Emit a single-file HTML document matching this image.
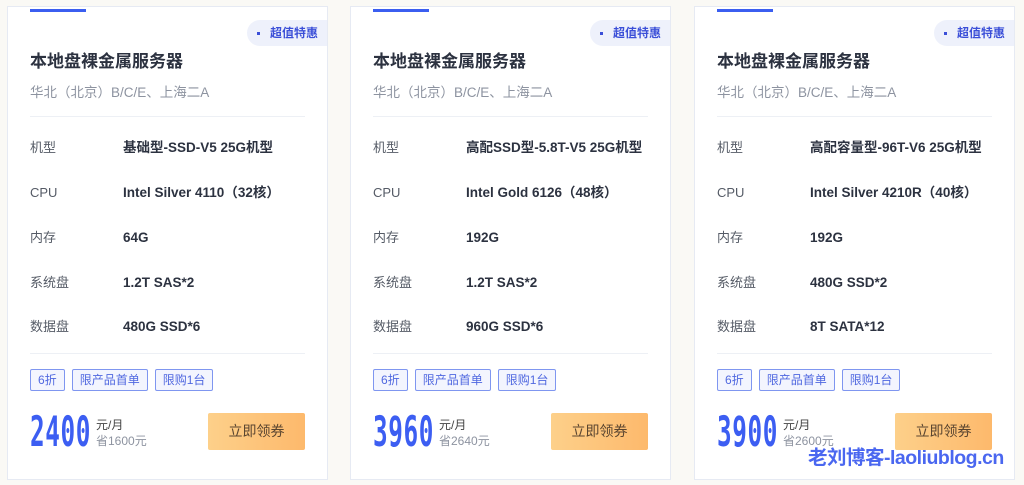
<!DOCTYPE html>
<html><head><meta charset="utf-8"><style>
*{margin:0;padding:0;box-sizing:border-box}
body{width:1024px;height:485px;background:#faf9f5;font-family:"Liberation Sans","Noto Sans CJK SC",sans-serif;position:relative;overflow:hidden}
.card{position:absolute;top:6px;width:321px;height:474px;background:#fff;border:1px solid #e6eaf3}
.bar{position:absolute;left:22px;top:2px;width:56px;height:3px;background:#3b5ef0}
.badge{position:absolute;right:0;top:13px;width:80px;height:26px;background:#eef1fb;border-radius:13px 0 0 13px;font-size:12px;color:#3b4fd8;font-weight:bold;line-height:26px;padding-left:10px}
.badge i{display:inline-block;width:3px;height:3px;background:#3b4fd8;margin-right:10px;vertical-align:middle}
.t{position:absolute;left:22px;top:40px;font-size:17px;font-weight:bold;color:#2c3240}
.s{position:absolute;left:22px;top:74px;font-size:13.5px;color:#8d93a0}
.hr{position:absolute;left:22px;width:275px;height:1px;background:#edf0f5}
.row{position:absolute;left:22px;font-size:13px;color:#555b66;line-height:18px;height:18px}
.row b{position:absolute;left:93px;top:0;white-space:nowrap;color:#2c3240;font-size:13.5px}
.tags{position:absolute;left:22px;top:362px;display:flex;gap:7px}
.tags span{border:1px solid #7f96f0;border-radius:2px;background:#f3f5fe;color:#5068e0;font-size:12px;height:22px;line-height:20px;padding:0 7px}
.price{position:absolute;left:22px;top:400px;font-family:"DejaVu Sans Mono","Liberation Mono",monospace;font-size:42px;color:#3c5ef2;font-weight:bold;transform:scaleX(.58);transform-origin:left;letter-spacing:1px}
.unit{position:absolute;left:88px;top:410px;font-size:12px;color:#444;line-height:16px}
.unit div+div{color:#8d93a0}
.btn{position:absolute;left:200px;top:406px;width:97px;height:37px;background:linear-gradient(90deg,#fdd08a,#fdb96c);border-radius:2px;font-size:14px;color:#5a4530;text-align:center;line-height:37px}
.wm{position:absolute;left:808px;top:441px;font-size:19.5px;font-weight:bold;color:#4a67f0;letter-spacing:-0.5px}
</style></head><body>
<div class="card" style="left:7px">
<div class="bar"></div><div class="badge"><i></i>超值特惠</div>
<div class="t">本地盘裸金属服务器</div><div class="s">华北（北京）B/C/E、上海二A</div>
<div class="hr" style="top:109px"></div>
<div class="row" style="top:132px">机型<b>基础型-SSD-V5 25G机型</b></div>
<div class="row" style="top:177px">CPU<b>Intel Silver 4110（32核）</b></div>
<div class="row" style="top:222px">内存<b>64G</b></div>
<div class="row" style="top:267px">系统盘<b>1.2T SAS*2</b></div>
<div class="row" style="top:311px">数据盘<b>480G SSD*6</b></div>
<div class="hr" style="top:346px"></div>
<div class="tags"><span>6折</span><span>限产品首单</span><span>限购1台</span></div>
<div class="price">2400</div><div class="unit"><div>元/月</div><div>省1600元</div></div>
<div class="btn">立即领券</div>
</div>
<div class="card" style="left:350px">
<div class="bar"></div><div class="badge"><i></i>超值特惠</div>
<div class="t">本地盘裸金属服务器</div><div class="s">华北（北京）B/C/E、上海二A</div>
<div class="hr" style="top:109px"></div>
<div class="row" style="top:132px">机型<b>高配SSD型-5.8T-V5 25G机型</b></div>
<div class="row" style="top:177px">CPU<b>Intel Gold 6126（48核）</b></div>
<div class="row" style="top:222px">内存<b>192G</b></div>
<div class="row" style="top:267px">系统盘<b>1.2T SAS*2</b></div>
<div class="row" style="top:311px">数据盘<b>960G SSD*6</b></div>
<div class="hr" style="top:346px"></div>
<div class="tags"><span>6折</span><span>限产品首单</span><span>限购1台</span></div>
<div class="price">3960</div><div class="unit"><div>元/月</div><div>省2640元</div></div>
<div class="btn">立即领券</div>
</div>
<div class="card" style="left:694px">
<div class="bar"></div><div class="badge"><i></i>超值特惠</div>
<div class="t">本地盘裸金属服务器</div><div class="s">华北（北京）B/C/E、上海二A</div>
<div class="hr" style="top:109px"></div>
<div class="row" style="top:132px">机型<b>高配容量型-96T-V6 25G机型</b></div>
<div class="row" style="top:177px">CPU<b>Intel Silver 4210R（40核）</b></div>
<div class="row" style="top:222px">内存<b>192G</b></div>
<div class="row" style="top:267px">系统盘<b>480G SSD*2</b></div>
<div class="row" style="top:311px">数据盘<b>8T SATA*12</b></div>
<div class="hr" style="top:346px"></div>
<div class="tags"><span>6折</span><span>限产品首单</span><span>限购1台</span></div>
<div class="price">3900</div><div class="unit"><div>元/月</div><div>省2600元</div></div>
<div class="btn">立即领券</div>
</div>
<div class="wm">老刘博客-laoliublog.cn</div>
</body></html>
